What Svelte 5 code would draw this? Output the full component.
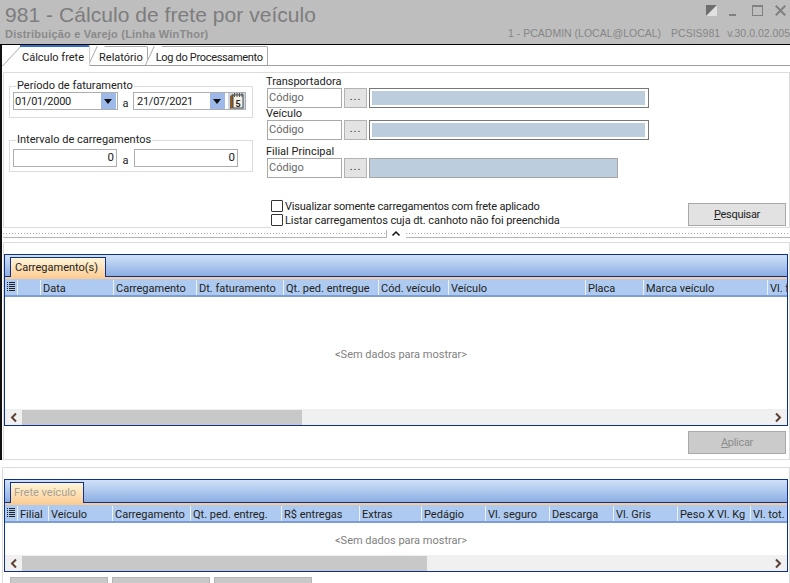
<script>
    const cols1 = ["Data", "Carregamento", "Dt. faturamento", "Qt. ped. entregue", "Cód. veículo", "Veículo", "Placa", "Marca veículo", "Vl. frete"];
    const cols2 = ["Filial", "Veículo", "Carregamento", "Qt. ped. entreg.", "R$ entregas", "Extras", "Pedágio", "Vl. seguro", "Descarga", "Vl. Gris", "Peso X Vl. Kg", "Vl. tot."];
    const lookups = [
        { label: "Transportadora", framed: true },
        { label: "Veículo", framed: true },
        { label: "Filial Principal", framed: false },
    ];
</script>

{#snippet grip()}
    <svg class="grip" width="8" height="11" viewBox="0 0 8 11">
        <path d="M0 1.5h8M0 3.5h8M0 5.5h8M0 7.5h8M0 9.5h8" stroke="#222" stroke-width="1" stroke-dasharray="1 1 6 0" />
    </svg>
{/snippet}

{#snippet scrollbar(thumb)}
    <div class="hscroll">
        <svg width="17" height="15" viewBox="0 0 17 15"><path d="M11 3.5 7 7.5l4 4" fill="none" stroke="#5c4033" stroke-width="2" /></svg>
        <div class="track"><div class="thumb {thumb}"></div></div>
        <svg width="18" height="15" viewBox="0 0 18 15"><path d="M7 3.5l4 4-4 4" fill="none" stroke="#5c4033" stroke-width="2" /></svg>
    </div>
{/snippet}

<div class="screen">
    <header class="titlebar">
        <div class="title-left">
            <div class="title">981 - Cálculo de frete por veículo</div>
            <div class="subtitle">Distribuição e Varejo (Linha WinThor)</div>
        </div>
        <div class="title-right">
            <div class="winbtns">
                <svg width="11" height="11" viewBox="0 0 11 11"><rect width="11" height="11" fill="#e0e0e0" /><path d="M0 0h11L0 11z" fill="#6e6e6e" /></svg>
                <svg width="7" height="11" viewBox="0 0 7 11"><rect y="9" width="7" height="2" fill="#808080" /></svg>
                <svg width="11" height="11" viewBox="0 0 11 11"><rect x=".5" y=".5" width="10" height="10" fill="none" stroke="#808080" /><rect width="11" height="2" fill="#808080" /></svg>
                <svg width="11" height="11" viewBox="0 0 11 11"><path d="M.8.8l9.4 9.4M10.2.8.8 10.2" stroke="#808080" stroke-width="2" /></svg>
            </div>
            <div class="session">
                <span>1 - PCADMIN (LOCAL@LOCAL)</span>
                <span>PCSIS981</span>
                <span>v.30.0.02.005</span>
            </div>
        </div>
    </header>

    <div class="upper">
        <nav class="tabs">
            <span class="tab active">Cálculo frete</span>
            <span class="tab">Relatório</span>
            <span class="tab log">Log do Processamento</span>
        </nav>

        <section class="filters">
            <div class="filter-left">
                <fieldset class="group period">
                    <legend>Período de faturamento</legend>
                    <div class="range">
                        <div class="datebox">
                            <span>01/01/2000</span>
                            <i class="drop"></i>
                        </div>
                        <span class="sep">a</span>
                        <div class="datebox second">
                            <span>21/07/2021</span>
                            <i class="drop"></i>
                            <svg class="cal" width="17" height="16" viewBox="0 0 17 16">
                                <rect width="17" height="16" fill="#c9d6e8" />
                                <path d="M2 3 5 1v14l-3 1z" fill="#8a5a2b" />
                                <rect x="5" y="2" width="10" height="13" fill="#f4f1e6" stroke="#444" />
                                <path d="M6.500 0v4M9 0v4M11.500 0v4M14 0v4" stroke="#555" />
                                <text x="7.500" y="13.500" class="cal-num">5</text>
                            </svg>
                        </div>
                    </div>
                </fieldset>

                <fieldset class="group interval">
                    <legend>Intervalo de carregamentos</legend>
                    <div class="range">
                        <div class="numbox">0</div>
                        <span class="sep">a</span>
                        <div class="numbox">0</div>
                    </div>
                </fieldset>
            </div>

            <div class="filter-right">
                {#each lookups as l}
                    <div class="lookup">
                        <div class="lookup-label">{l.label}</div>
                        <div class="lookup-row">
                            <div class="code">Código</div>
                            <button class="dots">...</button>
                            <div class="desc" class:framed={l.framed}><div></div></div>
                        </div>
                    </div>
                {/each}

                <div class="bottom-row">
                    <div class="checks">
                        <label class="check one"><i></i>Visualizar somente carregamentos com frete aplicado</label>
                        <label class="check two"><i></i>Listar carregamentos cuja dt. canhoto não foi preenchida</label>
                    </div>
                    <button class="action"><u>P</u>esquisar</button>
                </div>
            </div>
        </section>

        <div class="splitter">
            <div class="dots-line left"></div>
            <svg width="10" height="8" viewBox="0 0 10 8"><path d="M1.500 5.500 5 2l3.500 3.500" fill="none" stroke="#111" stroke-width="1.500" /></svg>
            <div class="dots-line right"></div>
        </div>

        <section class="panel panel-main">
            <div class="grid-box">
                <div class="strip"><span class="grid-tab">Carregamento(s)</span></div>
                <div class="colhead cols-a">
                    <div class="cell">{@render grip()}</div>
                    <div class="cell"></div>
                    {#each cols1 as c}<div class="cell">{c}</div>{/each}
                </div>
                <div class="empty">&lt;Sem dados para mostrar&gt;</div>
                {@render scrollbar("thumb-a")}
            </div>
            <div class="panel-foot">
                <button class="action off"><u>A</u>plicar</button>
            </div>
        </section>
    </div>

    <section class="panel panel-lower">
        <div class="grid-box">
            <div class="strip"><span class="grid-tab dim">Frete veículo</span></div>
            <div class="colhead cols-b">
                <div class="cell">{@render grip()}</div>
                {#each cols2 as c}<div class="cell">{c}</div>{/each}
            </div>
            <div class="empty">&lt;Sem dados para mostrar&gt;</div>
            {@render scrollbar("thumb-b")}
        </div>
        <div class="foot-btns">
            <div></div>
            <div></div>
            <div></div>
        </div>
    </section>
</div>

<style>
    :global(body) {
        margin: 0;
        background: #fff;
    }

    .screen {
        width: 790px;
        height: 583px;
        overflow: hidden;
        font-family: Roboto, "Liberation Sans", sans-serif;
        font-size: 11px;
        color: #222;
    }

    .titlebar {
        height: 45px;
        box-sizing: border-box;
        background: #bebebe;
        border-bottom: 1px solid #000;
        display: flex;
        justify-content: space-between;
        font-family: "Liberation Sans", Arial, sans-serif;
    }
    .title-left {
        padding: 3px 0 0 5px;
    }
    .title {
        font-size: 21px;
        letter-spacing: 0.05px;
        line-height: 24px;
        color: #7d7d7d;
    }
    .subtitle {
        font-size: 11px;
        font-weight: 700;
        letter-spacing: 0.2px;
        line-height: 12px;
        margin-top: 1px;
        color: #8a8a8a;
    }
    .title-right {
        display: flex;
        flex-direction: column;
        align-items: flex-end;
    }
    .winbtns {
        display: flex;
        gap: 12px;
        height: 11px;
        padding: 5px 4px 0 0;
    }
    .winbtns svg:nth-child(3) {
        margin-left: 4px;
    }
    .session {
        display: flex;
        gap: 10px;
        margin-top: 11px;
        font-size: 10.500px;
        line-height: 12px;
        color: #868686;
    }
    .session span:last-child {
        margin-left: -3px;
    }

    .upper {
        border-left: 2px solid #111;
        height: 415px;
        box-sizing: border-box;
    }

    .tabs {
        height: 21px;
        box-sizing: border-box;
        display: flex;
        align-items: flex-end;
        padding-left: 18px;
        border-bottom: 1px solid #a0a0a0;
    }
    .tab {
        position: relative;
        isolation: isolate;
        height: 18px;
        line-height: 22px;
        padding: 0 4px 0 2px;
        margin-left: 7px;
        border-top: 1px solid #a9a9a9;
        border-right: 1px solid #a9a9a9;
        border-radius: 0 2px 0 0;
        background: #fff;
        white-space: nowrap;
    }
    .tab.log {
        margin-left: 6px;
        letter-spacing: -0.32px;
    }
    .tab::before {
        content: "";
        position: absolute;
        z-index: -1;
        left: -8px;
        top: -1px;
        bottom: 0;
        width: 8px;
        box-sizing: border-box;
        border-left: 1px solid #a9a9a9;
        background: #fff;
        transform: skewX(-25deg);
        transform-origin: left bottom;
        margin-left: -1px;
    }
    .tab.active {
        height: 19px;
        line-height: 22px;
        padding: 0 5px 0 2px;
        margin-left: 0;
        border-top: 2px solid #2f74c9;
        border-right-color: #ccc;
        margin-bottom: -1px;
        z-index: 1;
    }
    .tab.active::before {
        left: -17px;
        top: 0;
        width: 18px;
        transform: skewX(-43deg);
    }

    .filters {
        margin: 6px 0 0 1px;
        height: 156px;
        box-sizing: border-box;
        border: 1px solid #dcdcdc;
        display: flex;
        padding: 3px 3px 0 5px;
    }
    .filter-left {
        width: 244px;
        display: flex;
        flex-direction: column;
        gap: 15px;
        padding-top: 3px;
    }
    .group {
        margin: 0;
        padding: 0 3px;
        border: 1px solid #dcdcdc;
        min-width: 0;
    }
    .group legend {
        padding: 0 1px;
        margin-left: 3px;
        line-height: 14px;
    }
    .period {
        height: 37px;
    }
    .interval {
        height: 37px;
    }
    .range {
        display: flex;
        align-items: center;
        margin-top: -1px;
    }
    .interval .range {
        margin-top: 2px;
    }
    .sep {
        width: 15px;
        text-align: center;
        padding-top: 4px;
    }
    .datebox {
        width: 105px;
        height: 18px;
        box-sizing: border-box;
        border: 1px solid #aeaeae;
        display: flex;
        justify-content: space-between;
        line-height: 17px;
        background: #fff;
        padding-left: 1px;
        letter-spacing: -0.25px;
    }
    .datebox.second {
        width: 113px;
        padding-left: 3px;
    }
    .drop {
        width: 15px;
        background: #9db9ea;
        position: relative;
        margin: 0 1px 0 auto;
    }
    .drop::after {
        content: "";
        position: absolute;
        left: 3px;
        top: 6px;
        border: 4px solid transparent;
        border-top: 5px solid #111;
        border-bottom: none;
    }
    .cal {
        margin-left: 2px;
        flex: none;
    }
    .cal-num {
        font-size: 9px;
        font-weight: 700;
        fill: #222;
    }
    .numbox {
        width: 104px;
        height: 18px;
        box-sizing: border-box;
        border: 1px solid #aeaeae;
        text-align: right;
        padding-right: 2px;
        line-height: 15px;
        font-size: 11.500px;
    }
    .interval .sep {
        width: 17px;
    }

    .filter-right {
        flex: 1;
        margin-top: -1px;
        padding: 0 0 1px 13px;
        display: flex;
        flex-direction: column;
    }
    .lookup {
        height: 32px;
    }
    .lookup:nth-child(2) {
        height: 38px;
    }
    .lookup:nth-child(3) {
        height: 34px;
    }
    .lookup-label {
        height: 13px;
        line-height: 13px;
    }
    .lookup-row {
        display: flex;
        align-items: center;
        height: 20px;
        padding-left: 1px;
    }
    .code {
        width: 75px;
        height: 20px;
        box-sizing: border-box;
        border: 1px solid #a9a9a9;
        padding-left: 1px;
        line-height: 18px;
        color: #666;
    }
    .dots {
        width: 23px;
        height: 20px;
        padding: 0 0 4px;
        margin: 0 2px;
        border: 1px solid #b3b3b3;
        background: #e3e3e3;
        font: inherit;
        letter-spacing: 1px;
        color: #222;
    }
    .desc {
        width: 280px;
        height: 20px;
        box-sizing: border-box;
        padding: 2px 3px 2px 2px;
    }
    .desc div {
        height: 100%;
        background: #bccddd;
    }
    .desc.framed {
        border: 1px solid #777;
    }
    .desc:not(.framed) {
        width: 249px;
        padding: 0;
        border: 1px solid #a5a5a5;
    }
    .bottom-row {
        flex: 1;
        display: flex;
        justify-content: space-between;
        align-items: flex-end;
    }
    .checks {
        margin-left: 5px;
        margin-bottom: -3px;
        padding-bottom: 2px;
        background: #fff;
    }
    .check {
        display: flex;
        align-items: center;
        height: 14px;
        white-space: nowrap;
    }
    .check.one {
        letter-spacing: -0.2px;
    }
    .check.two {
        letter-spacing: -0.08px;
    }
    .check i {
        width: 10px;
        height: 10px;
        border: 1px solid #333;
        border-radius: 1px;
        margin-right: 2px;
    }
    .action {
        width: 98px;
        height: 23px;
        padding: 0;
        border: 1px solid #a8a8a8;
        background: #e2e2e2;
        font: inherit;
        letter-spacing: -0.3px;
        color: #222;
    }
    .action.off {
        background: #cbcbcb;
        color: #8d8d8d;
    }

    .splitter {
        height: 9px;
        margin: 1px 0 0 1px;
        display: flex;
        align-items: center;
    }
    .splitter svg {
        margin: 0 5px 0 4px;
    }
    .dots-line {
        flex: 1;
        height: 8px;
        box-sizing: border-box;
        border-bottom: 1px solid #b5b5b5;
        background: repeating-linear-gradient(90deg, #aaa 0 1px, transparent 1px 3px) center / 100% 1px no-repeat;
    }
    .dots-line.left {
        flex: 0 0 384px;
        border-right: 1px solid #b5b5b5;
    }

    .panel {
        border: 1px solid #dcdcdc;
        background: #fff;
    }
    .panel-main {
        margin: 4px 0 0 1px;
        height: 218px;
        box-sizing: border-box;
        padding: 11px 0 0 0;
    }
    .panel-lower {
        margin: 7px 0 0 2px;
        height: 120px;
        box-sizing: border-box;
        padding: 11px 0 0 1px;
    }

    .grid-box {
        width: 784px;
        box-sizing: border-box;
        border: 1px solid #0e2f8c;
        display: flex;
        flex-direction: column;
    }
    .panel-main .grid-box {
        height: 172px;
    }
    .panel-lower .grid-box {
        height: 93px;
    }

    .strip {
        height: 22px;
        box-sizing: border-box;
        padding: 2px 0 0 5px;
        background: linear-gradient(#d0e1f8, #8caee2);
        border-bottom: 1px solid #0e2f8c;
        display: flex;
    }
    .panel-lower .strip {
        height: 23px;
    }
    .grid-tab {
        padding: 0 7px 0 4px;
        height: 19px;
        line-height: 19px;
        border: 1px solid #0e2f8c;
        border-bottom: none;
        background: linear-gradient(#fff6d8, #fdce97);
        color: #222;
    }
    .grid-tab.dim {
        height: 20px;
        padding-left: 3px;
        color: #a8a296;
    }

    .colhead {
        display: grid;
        flex: none;
        height: 20px;
        box-sizing: border-box;
        border-top: 2px solid #fbcb94;
        border-bottom: 2px solid #7d9dd5;
        background: #aecaf0;
        overflow: hidden;
    }
    .cols-a {
        grid-template-columns: 12px 23px 73px 83px 87px 95px 70px 137px 58px 124px 40px;
    }
    .cols-b {
        grid-template-columns: 12px 31px 64px 78px 91px 78px 62px 64px 64px 64px 64px 73px 40px;
    }
    .cell {
        box-sizing: border-box;
        padding-left: 2px;
        line-height: 17px;
        white-space: nowrap;
        overflow: hidden;
        border-left: 1px solid #eaf2fc;
        margin-top: 1px;
    }
    .cell:first-child {
        border-left: none;
    }
    .grip {
        display: block;
        margin: 1px 0 0 0;
    }

    .empty {
        flex: 1;
        min-height: 0;
        display: flex;
        align-items: center;
        justify-content: center;
        color: #808080;
        padding: 2px 0 0 10px;
    }

    .hscroll {
        height: 16px;
        flex: none;
        display: flex;
        align-items: center;
        background: #f0f0f0;
    }
    .track {
        flex: 1;
        height: 15px;
    }
    .thumb {
        height: 100%;
        background: #c8c8c8;
    }
    .thumb-a {
        width: 280px;
    }
    .thumb-b {
        width: 405px;
    }

    .panel-foot {
        display: flex;
        justify-content: flex-end;
        padding: 5px 3px 0 0;
    }

    .foot-btns {
        display: flex;
        gap: 4px;
        padding: 5px 0 0 6px;
    }
    .foot-btns div {
        width: 96px;
        height: 20px;
        border: 1px solid #b5b5b5;
        background: #c9c9c9;
    }
</style>
